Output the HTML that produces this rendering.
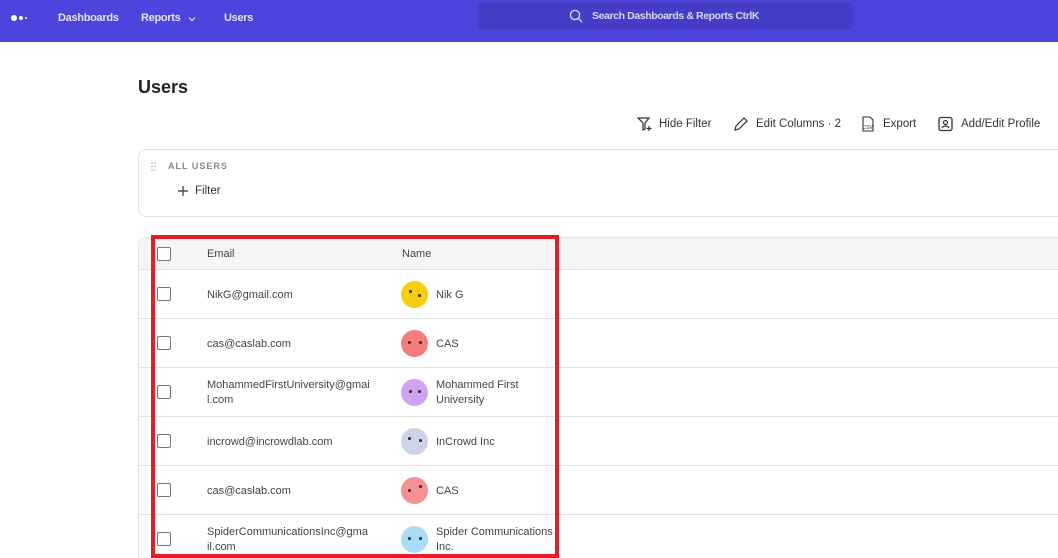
<!DOCTYPE html>
<html><head><style>
*{box-sizing:border-box;margin:0;padding:0}
html,body{width:1058px;height:558px;overflow:hidden}
body{background:#fff;font-family:"Liberation Sans",sans-serif;color:#333;position:relative}
.nav{position:absolute;left:0;top:0;width:1058px;height:42px;background:#4c44dd}
.nav span{position:absolute;top:12px;color:#e6e4fb;font-size:11px;font-weight:bold;letter-spacing:-0.3px}
.dot{position:absolute;border-radius:50%;background:#fff}
.search{position:absolute;left:477px;top:2px;width:377px;height:28px;background:#453dc6;border-radius:6px}
.search span{position:absolute;left:115px;top:8px;color:#d9d6f7;font-size:10.5px;font-weight:bold;letter-spacing:-0.4px}
h1{position:absolute;left:138px;top:77px;font-size:18px;font-weight:bold;color:#222}
.tb{position:absolute;top:118px;font-size:11.5px;color:#333}
.filt{position:absolute;left:138px;top:149px;width:940px;height:68px;border:1px solid #e2e2e2;border-radius:8px}
.table{position:absolute;left:138px;top:237px;width:940px;height:400px;border:1px solid #e2e2e2;border-radius:8px;overflow:hidden}
.hdr{position:absolute;left:0;top:0;width:100%;height:32px;background:#f5f5f5;border-bottom:1px solid #e2e2e2}
.row{position:absolute;left:0;width:100%;height:49px;border-bottom:1px solid #e2e2e2}
.cb{position:absolute;left:18px;width:14px;height:14px;border:1px solid #777;border-radius:2px;background:#fff}
.t{position:absolute;font-size:11px;color:#444;line-height:15px}
.av{position:absolute;left:262px;width:27px;height:27px;border-radius:50%}
.av i{position:absolute;width:2.5px;height:2.5px;border-radius:50%;background:#333}
.red{position:absolute;left:151px;top:235px;width:408px;height:323px;border:4px solid #e81c24}
</style></head><body>
<div class="nav">
<div class="dot" style="left:11px;top:15px;width:6px;height:6px"></div>
<div class="dot" style="left:19px;top:16px;width:4px;height:4px"></div>
<div class="dot" style="left:25px;top:17px;width:2px;height:2px"></div>
<span style="left:58px">Dashboards</span>
<span style="left:141px">Reports</span>
<svg style="position:absolute;left:188px;top:16px" width="8" height="6" viewBox="0 0 8 6"><path d="M1 1.5l3 3 3-3" fill="none" stroke="#e6e4fb" stroke-width="1.2"/></svg>
<span style="left:224px">Users</span>
<div class="search">
<svg style="position:absolute;left:92px;top:7px" width="14" height="14" viewBox="0 0 14 14"><circle cx="6" cy="6" r="4.6" fill="none" stroke="#ddd" stroke-width="1.3"/><path d="M9.3 9.3 13 13" stroke="#ddd" stroke-width="1.3"/></svg>
<span>Search Dashboards &amp; Reports CtrlK</span></div>
</div>
<h1>Users</h1>
<svg style="position:absolute;left:637px;top:117px" width="16" height="15" viewBox="0 0 16 15"><path d="M1 1h11L8 6v6l-2 1V6z" fill="none" stroke="#333" stroke-width="1.2"/><path d="M12 9v5M9.5 11.5h5" stroke="#333" stroke-width="1.2"/></svg>
<div class="tb" style="left:659px">Hide Filter</div>
<svg style="position:absolute;left:733px;top:116px" width="16" height="16" viewBox="0 0 16 16"><path d="M2 14l1-4 8-8 3 3-8 8z" fill="none" stroke="#333" stroke-width="1.2"/></svg>
<div class="tb" style="left:756px">Edit Columns · 2</div>
<svg style="position:absolute;left:861px;top:116px" width="14" height="16" viewBox="0 0 14 16"><path d="M2 1h7l3 3v11H2z" fill="none" stroke="#333" stroke-width="1.1"/><text x="1.5" y="13" font-size="5" font-family="Liberation Sans" fill="#333">CSV</text></svg>
<div class="tb" style="left:883px">Export</div>
<svg style="position:absolute;left:938px;top:116px" width="15" height="16" viewBox="0 0 15 16"><rect x="1" y="1.5" width="13" height="13" rx="2" fill="none" stroke="#333" stroke-width="1.3"/><circle cx="7.5" cy="6.5" r="2" fill="none" stroke="#333" stroke-width="1.2"/><path d="M4 12c1-2.5 6-2.5 7 0" fill="none" stroke="#333" stroke-width="1.2"/></svg>
<div class="tb" style="left:961px">Add/Edit Profile</div>
<div class="filt">
<svg style="position:absolute;left:12px;top:12px" width="6" height="9" viewBox="0 0 6 9"><g fill="#aaa"><circle cx="1" cy="1" r=".8"/><circle cx="4" cy="1" r=".8"/><circle cx="1" cy="4.5" r=".8"/><circle cx="4" cy="4.5" r=".8"/><circle cx="1" cy="8" r=".8"/><circle cx="4" cy="8" r=".8"/></g></svg>
<div style="position:absolute;left:29px;top:11px;font-size:9px;font-weight:bold;color:#888;letter-spacing:1px">ALL USERS</div>
<svg style="position:absolute;left:39px;top:36px" width="10" height="10" viewBox="0 0 10 10"><path d="M5 0v10M0 5h10" stroke="#333" stroke-width="1.2"/></svg>
<div style="position:absolute;left:56px;top:35px;font-size:11.5px;color:#333">Filter</div>
</div>
<div class="table">
<div class="hdr"><div class="cb" style="top:9px"></div><div class="t" style="left:68px;top:9px">Email</div><div class="t" style="left:263px;top:9px">Name</div></div>
<div class="row" style="top:32px"><div class="cb" style="top:17px"></div><div class="t" style="left:68px;top:18px">NikG@gmail.com</div><div class="av" style="top:11px;background:#f7cd0c"><i style="left:8px;top:9px"></i><i style="left:17px;top:13px"></i></div><div class="t" style="left:297px;top:18px">Nik G</div></div>
<div class="row" style="top:81px"><div class="cb" style="top:17px"></div><div class="t" style="left:68px;top:18px">cas@caslab.com</div><div class="av" style="top:11px;background:#f67b7b"><i style="left:7px;top:11px"></i><i style="left:18px;top:11px"></i></div><div class="t" style="left:297px;top:18px">CAS</div></div>
<div class="row" style="top:130px"><div class="cb" style="top:17px"></div><div class="t" style="left:68px;top:10px">MohammedFirstUniversity@gmai<br>l.com</div><div class="av" style="top:11px;background:#cfa3f2"><i style="left:8px;top:11px"></i><i style="left:17px;top:11px"></i></div><div class="t" style="left:297px;top:10px">Mohammed First<br>University</div></div>
<div class="row" style="top:179px"><div class="cb" style="top:17px"></div><div class="t" style="left:68px;top:18px">incrowd@incrowdlab.com</div><div class="av" style="top:11px;background:#cdd3e8"><i style="left:7px;top:9px"></i><i style="left:18px;top:11px"></i></div><div class="t" style="left:297px;top:18px">InCrowd Inc</div></div>
<div class="row" style="top:228px"><div class="cb" style="top:17px"></div><div class="t" style="left:68px;top:18px">cas@caslab.com</div><div class="av" style="top:11px;background:#f79191"><i style="left:7px;top:12px"></i><i style="left:18px;top:8px"></i></div><div class="t" style="left:297px;top:18px">CAS</div></div>
<div class="row" style="top:277px"><div class="cb" style="top:17px"></div><div class="t" style="left:68px;top:10px">SpiderCommunicationsInc@gma<br>il.com</div><div class="av" style="top:11px;background:#a9dcf7"><i style="left:7px;top:11px"></i><i style="left:18px;top:11px"></i></div><div class="t" style="left:297px;top:10px">Spider Communications<br>Inc.</div></div>
</div>
<div class="red"></div>
</body></html>
